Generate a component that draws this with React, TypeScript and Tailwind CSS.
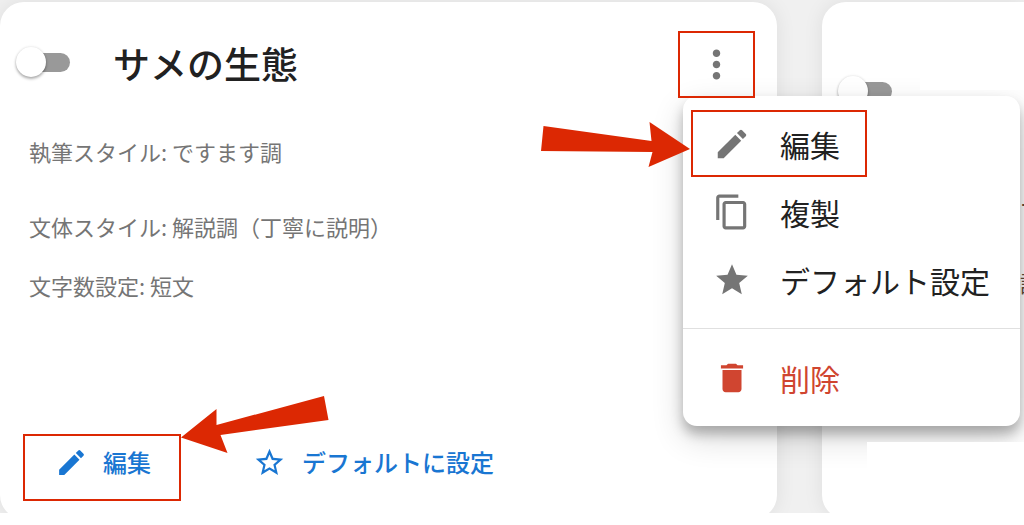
import { ReactNode } from "react";
import {
  MdContentCopy,
  MdDelete,
  MdEdit,
  MdMoreVert,
  MdStar,
  MdStarBorder,
} from "react-icons/md";

const Toggle = ({ label }: { label: string }) => (
  <input
    type="checkbox"
    role="switch"
    aria-label={label}
    className="relative ml-1 h-[19px] w-[50px] shrink-0 appearance-none rounded-full bg-[#999999] before:absolute before:-left-1 before:-top-[6px] before:size-[30px] before:rounded-full before:bg-white before:shadow-[0_2px_3px_rgba(0,0,0,0.3),0_0_3px_rgba(0,0,0,0.12)]"
  />
);

const Card = ({ className, children }: { className: string; children: ReactNode }) => (
  <section
    className={`-mb-[6px] rounded-3xl bg-white shadow-[0_0_20px_rgba(0,0,0,0.08)] ${className}`}
  >
    {children}
  </section>
);

type MenuItemProps = { icon: ReactNode; text: string; className?: string };

const MenuItem = ({ icon, text, className = "text-[#212121]" }: MenuItemProps) => (
  <button
    className={`flex h-[68px] w-full items-center gap-[29px] pl-[30px] text-left text-[30px] leading-10 whitespace-nowrap ${className}`}
  >
    {icon}
    {text}
  </button>
);

const Menu = () => (
  <div className="absolute left-[5px] top-[65px] z-20 w-[337px] rounded-[14px] bg-white py-[14px] shadow-[0_8px_12px_rgba(0,0,0,0.25),0_12px_32px_rgba(0,0,0,0.16)]">
    <div className="relative">
      <MenuItem icon={<MdEdit size={38} className="text-[#757575]" />} text="編集" />
      <div className="pointer-events-none absolute left-2 top-0 h-[67px] w-[176px] border-2 border-[#dc2803]" />
      <svg
        viewBox="0 0 149 46"
        className="absolute right-full top-3 -mr-[7px] h-[46px] w-[149px]"
        fill="#dc2803"
      >
        <path d="M2.5 4 110.5 19 108.5 0 149 27 107.5 45 111.5 30 0 29z" />
      </svg>
    </div>
    <MenuItem icon={<MdContentCopy size={38} className="text-[#757575]" />} text="複製" />
    <MenuItem icon={<MdStar size={38} className="text-[#757575]" />} text="デフォルト設定" />
    <hr className="mb-[15px] mt-[14px] border-[#e0e0e0]" />
    <MenuItem icon={<MdDelete size={38} />} text="削除" className="text-[#d04530]" />
  </div>
);

const StyleCard = () => (
  <Card className="min-w-0 flex-1 pb-[18px] pt-[29px]">
    <div className="flex items-center pl-4 pr-[22px]">
      <div className="flex flex-1 items-center gap-[43px] pb-1">
        <Toggle label="サメの生態" />
        <h2 className="text-[37px] font-medium leading-[54px] text-[#212121]">サメの生態</h2>
      </div>
      <div className="relative">
        <button
          aria-label="メニュー"
          className="relative z-30 flex h-[67px] w-[77px] items-center justify-center border-2 border-[#dc2803] text-[#757575]"
        >
          <MdMoreVert size={45} />
        </button>
        <Menu />
      </div>
    </div>
    <div className="mt-[38px] px-[29px] text-[22px] leading-[30px] text-[#757575]">
      <p>執筆スタイル: ですます調</p>
      <p className="mt-[45px]">文体スタイル: 解説調（丁寧に説明）</p>
      <p className="mt-[29px]">文字数設定: 短文</p>
    </div>
    <div className="mt-[134px] flex gap-[72px] pl-[23px] text-2xl font-medium text-[#1976d2]">
      <div className="relative">
        <button className="flex h-[67px] w-[158px] items-center gap-[15px] border-2 border-[#dc2803] pb-[11px] pl-[30px]">
          <MdEdit size={33} />
          編集
        </button>
        <svg
          viewBox="0 0 148 58"
          className="absolute -top-[38px] left-full h-[58px] w-[148px]"
          fill="#dc2803"
        >
          <path d="M143 0 35.5 29V13L0 41.5 46.5 57 39.5 39 147.5 24z" />
        </svg>
      </div>
      <button className="flex items-center gap-4 pb-[11px]">
        <MdStarBorder size={33} />
        デフォルトに設定
      </button>
    </div>
  </Card>
);

const NextCard = () => (
  <Card className="relative w-[202px] shrink-0 overflow-x-clip rounded-r-none pl-4 pt-20">
    <div className="flex">
      <Toggle label="スタイル" />
    </div>
    <div className="ml-[182px] mt-[87px] text-[22px] leading-[30px] text-[#5f4a3c]">
      <p>ー</p>
      <p className="mt-[49px]">説</p>
    </div>
    <div className="absolute right-0 top-0 z-30 h-[88px] w-[104px] bg-white" />
    <div className="absolute bottom-0 right-0 top-[440px] z-30 w-[157px] bg-white" />
  </Card>
);

export default function App() {
  return (
    <div className="min-h-screen bg-white font-['Noto_Sans_CJK_JP',sans-serif]">
      <main className="flex gap-[45px] overflow-hidden bg-[#f0f0f0] pt-[2px]">
        <StyleCard />
        <NextCard />
      </main>
    </div>
  );
}
